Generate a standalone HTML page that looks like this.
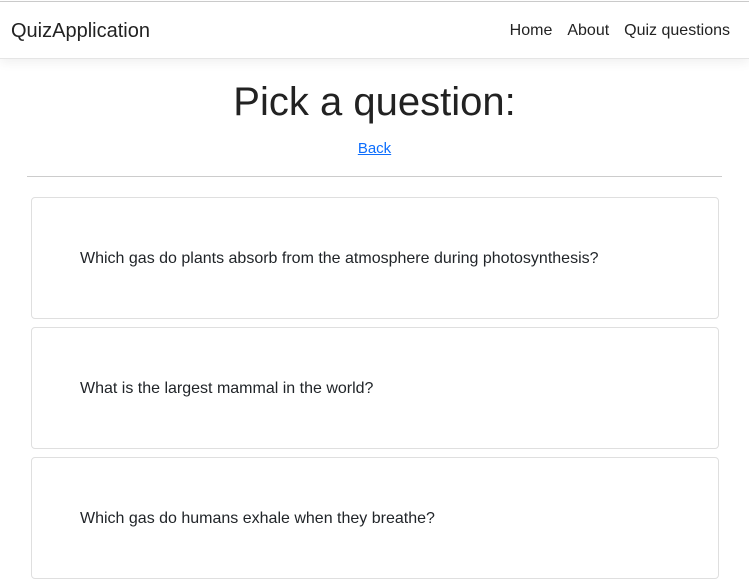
<!DOCTYPE html>
<html><head><style>
body{margin:0;width:749px;height:521px;overflow:hidden;background:#fff;font-family:"Liberation Sans",sans-serif;color:#212529;}
.top{position:absolute;top:0;left:0;width:749px;height:1px;background:#fff;border-bottom:1px solid #ccc;}
.nav{position:absolute;top:2px;left:0;width:749px;height:56px;border-bottom:1px solid #e5e5e5;box-shadow:0 4px 10px rgba(0,0,0,.06);background:#fff;}
.brand{position:absolute;left:11px;top:18px;font-size:20px;color:#222;}
.links{position:absolute;right:19px;top:20px;font-size:16px;color:#222;}
.links span{margin-left:15px;}
h1{position:absolute;top:80px;left:0;width:749px;text-align:center;margin:0;font-weight:300;font-size:40px;color:#222;}
.back{position:absolute;top:140px;left:0;width:749px;text-align:center;font-size:15px;}
.back a{color:#0d6efd;text-decoration:underline;}
hr{position:absolute;top:176px;left:27px;width:695px;margin:0;border:0;border-top:1px solid #ccc;}
.card{position:absolute;left:31px;width:686px;height:120px;border:1px solid #dfdfdf;border-radius:4px;}
.card div{position:absolute;left:48px;top:52px;font-size:16px;}
</style></head><body>
<div class="top"></div>
<div class="nav"><div class="brand">QuizApplication</div><div class="links"><span>Home</span><span>About</span><span>Quiz questions</span></div></div>
<h1>Pick a question:</h1>
<div class="back"><a>Back</a></div>
<hr>
<div class="card" style="top:197px"><div>Which gas do plants absorb from the atmosphere during photosynthesis?</div></div>
<div class="card" style="top:327px"><div>What is the largest mammal in the world?</div></div>
<div class="card" style="top:457px"><div>Which gas do humans exhale when they breathe?</div></div>
</body></html>
